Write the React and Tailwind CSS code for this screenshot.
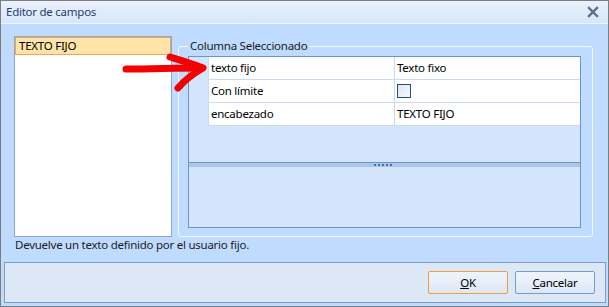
import React from "react";

const rows = [
    { name: "texto fijo", value: "Texto fixo" },
    { name: "Con límite", check: true },
    { name: "encabezado", value: "TEXTO FIJO" },
];

function CloseIcon() {
    return (
        <svg width="12" height="12" viewBox="0 0 12 12">
            <path d="M2 2 L10 10 M10 2 L2 10" stroke="#5d6f8c" strokeWidth="2.4" strokeLinecap="square" />
        </svg>
    );
}

function RedArrow() {
    return (
        <svg
            className="absolute left-[115px] top-[48px] pointer-events-none"
            width="100"
            height="46"
            viewBox="115 48 100 46"
        >
            <path
                d="M125 68 C150 68 175 67 199 67"
                stroke="#f40000"
                strokeWidth="7"
                strokeLinecap="round"
                fill="none"
            />
            <path
                d="M169 56 C182 60 192 63 202 67 C193 72 184 79 177 87"
                stroke="#f40000"
                strokeWidth="7"
                strokeLinecap="round"
                strokeLinejoin="round"
                fill="none"
            />
        </svg>
    );
}

export default function App() {
    return (
        <div className="relative w-[609px] h-[307px] flex flex-col border border-[#7d7d7d] bg-[#bfdbff] font-['Noto_Sans',sans-serif] text-[11.5px] tracking-[-0.25px] text-black overflow-hidden">
            {/* title bar */}
            <div className="h-[23px] flex items-center justify-between pl-[5px] pr-[9px] border-b border-[#eef5ff] bg-gradient-to-b from-[#e9f1fc] to-[#d8e6f9]">
                <span className="text-[#1f3c6b]">Editor de campos</span>
                <CloseIcon />
            </div>

            <div className="flex-1 flex flex-col">
                <div className="flex gap-[6px] pt-[12px] pl-[13px] pr-[15px] h-[213px]">
                    {/* list */}
                    <div className="w-[158px] border border-[#88a6d3] bg-white">
                        <div className="h-[18px] flex items-center pl-[3px] bg-[#ffe4a9] border border-[#f6a54e] leading-none">
                            TEXTO FIJO
                        </div>
                    </div>

                    {/* group */}
                    <fieldset className="flex-1 border border-[#f3f8ff] rounded-[3px] flex flex-col">
                        <legend className="ml-[9px] px-[2px] leading-[20px] text-[#1b1b1b]">
                            Columna Seleccionado
                        </legend>
                        <div className="ml-[9px] mr-[11px] mb-[8px] h-[172px] border border-[#6c95d0] bg-[#d4e4fa] flex flex-col">
                            <div className="h-[105px] flex">
                                <div className="w-[19px]" />
                                <div className="flex-1 flex flex-col bg-[#d4e4fa]">
                                    {rows.map((r) => (
                                        <div
                                            key={r.name}
                                            className="h-[23px] flex bg-white border-b border-l border-[#c9dbf3]"
                                        >
                                            <div className="w-[186px] pl-[2px] flex items-center border-r border-[#c9dbf3]">
                                                {r.name}
                                            </div>
                                            <div className="flex-1 pl-[2px] flex items-center">
                                                {r.check ? (
                                                    <span className="w-[14px] h-[14px] border border-[#1d5181] bg-gradient-to-br from-[#dfe4ec] to-[#f7f9fc]" />
                                                ) : (
                                                    r.value
                                                )}
                                            </div>
                                        </div>
                                    ))}
                                </div>
                            </div>
                            <div className="h-[5px] border-t border-[#6c95d0] bg-[#aec6e8] flex justify-center items-center gap-[2px] pr-[4px]">
                                {[0, 1, 2, 3, 4].map((i) => (
                                    <span key={i} className="w-[2px] h-[2px] bg-[#3d6fb8]" />
                                ))}
                            </div>
                            <div className="flex-1" />
                        </div>
                    </fieldset>
                </div>

                <div className="h-[25px] pl-[14px] leading-[16px] text-[#1b1b1b]">
                    Devuelve un texto definido por el usuario fijo.
                </div>

                <div className="ml-[3px] mr-[2px] h-[41px] border border-[#7d9bc8] bg-[#dde8f6] flex justify-end gap-[7px] pt-[8px] pr-[10px]">
                    <button className="w-[80px] h-[23px] rounded-[2px] border border-[#f29d3b] bg-gradient-to-b from-[#f0f5fc] to-[#dce7f6] leading-none">
                        <span className="underline">O</span>K
                    </button>
                    <button className="w-[80px] h-[23px] rounded-[2px] border border-[#7c9ac6] bg-gradient-to-b from-[#f0f5fc] to-[#dce7f6] leading-none">
                        <span className="underline">C</span>ancelar
                    </button>
                </div>
            </div>

            <RedArrow />
        </div>
    );
}
